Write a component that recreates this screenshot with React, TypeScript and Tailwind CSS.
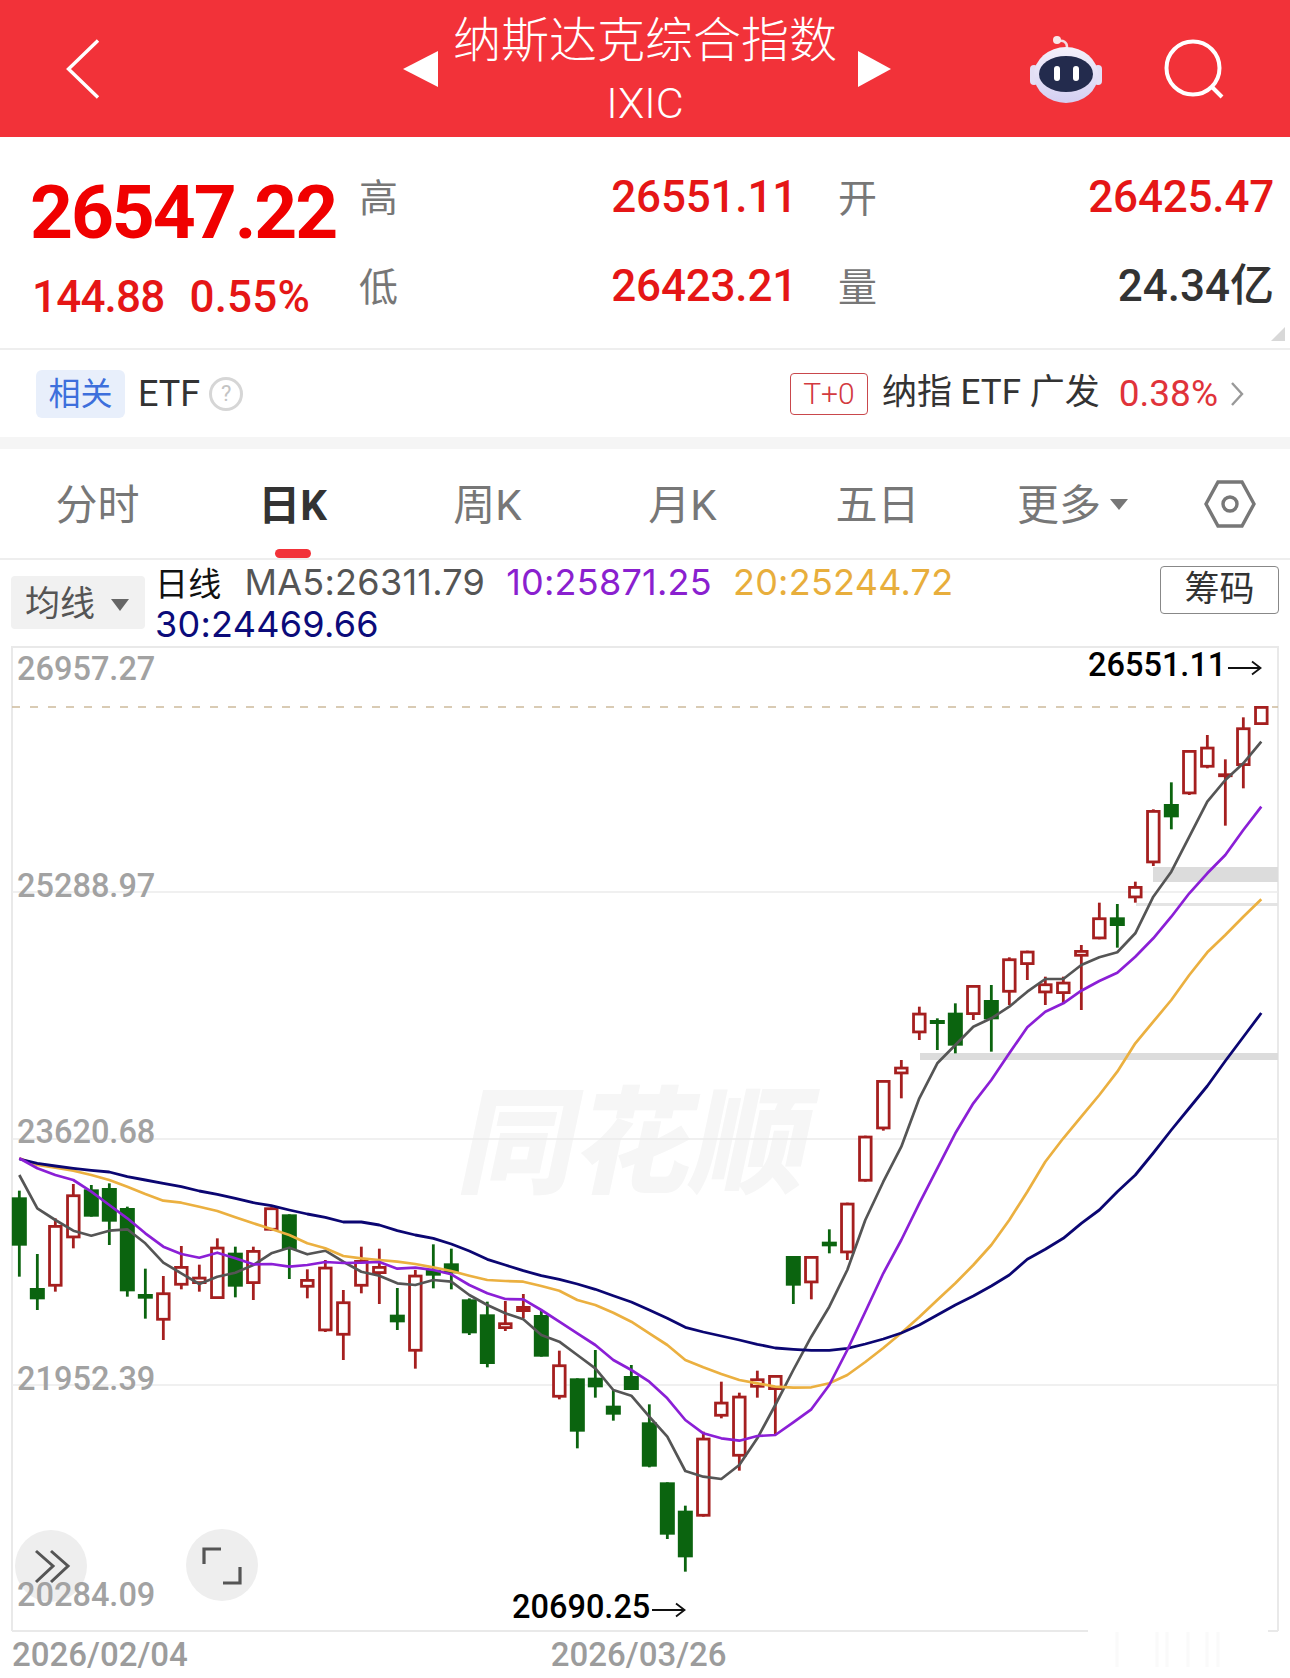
import React from 'react';

type Candle = ['r' | 'g' | 'f', number, number, number, number];

// y values are kept in thirds of a pixel, each block from its own base line
const toY = (base: number) => (v: number) => base + v / 3;
const blockA = toY(1130);
const blockB = toY(1040);
const blockC = toY(680);

const rawA: Candle[] = [
  ['g', 182, 440, 202, 347], ['g', 372, 540, 474, 508], ['r', 265, 485, 285, 470], ['r', 162, 355, 193, 325],
  ['g', 165, 260, 178, 260], ['g', 160, 345, 174, 275], ['g', 230, 500, 234, 484], ['g', 416, 566, 492, 506],
  ['r', 438, 630, 487, 572], ['r', 348, 478, 408, 467], ['r', 404, 485, 440, 462], ['r', 325, 507, 350, 507],
  ['g', 350, 502, 368, 470], ['r', 350, 510, 360, 462], ['r', 232, 302, 232, 302], ['g', 253, 447, 253, 358],
  ['r', 418, 505, 447, 473], ['r', 390, 606, 410, 604], ['r', 480, 690, 514, 617], ['r', 350, 490, 390, 470],
  ['r', 356, 522, 408, 432], ['g', 474, 600, 554, 577], ['r', 420, 716, 434, 665], ['g', 343, 475, 420, 437],
  ['g', 356, 478, 400, 430], ['g', 505, 615, 508, 610], ['g', 515, 712, 553, 702], ['r', 513, 603, 577, 597],
  ['f', 492, 565, 528, 546], ['g', 540, 680, 555, 680], ['r', 662, 808, 703, 803], ['g', 745, 955, 745, 905],
  ['g', 660, 803, 743, 772], ['g', 780, 872, 827, 854], ['g', 705, 780, 738, 780], ['g', 823, 1012, 877, 1010],
  ['g', 1057, 1227, 1057, 1214], ['g', 1127, 1325, 1142, 1282], ['r', 905, 1160, 923, 1160], ['r', 755, 865, 815, 860],
  ['r', 788, 1022, 797, 980], ['r', 722, 803, 745, 773], ['r', 735, 915, 735, 780], ['g', 378, 522, 378, 467],
  ['r', 378, 508, 378, 460], ['g', 298, 370, 335, 349], ['r', 218, 390, 218, 370],
];
const rawB: Candle[] = [['r', 287, 425, 287, 425], ['r', 120, 272, 120, 268], ['r', 60, 175, 80, 103]];
const rawC: Candle[] = [
  ['r', 980, 1080, 998, 1060], ['g', 1015, 1110, 1020, 1032], ['g', 970, 1120, 998, 1097], ['r', 915, 1020, 915, 1005],
  ['g', 915, 1115, 960, 1018], ['r', 832, 975, 835, 938], ['r', 812, 900, 812, 855], ['r', 890, 975, 910, 940],
  ['r', 890, 970, 905, 942], ['r', 795, 990, 810, 830], ['r', 668, 778, 712, 778], ['g', 672, 803, 712, 738],
  ['r', 605, 668, 618, 655], ['r', 388, 558, 390, 550], ['g', 307, 448, 372, 412], ['r', 210, 345, 210, 343],
  ['r', 165, 265, 200, 263], ['r', 238, 437, 280, 290], ['r', 112, 325, 142, 258], ['r', 78, 135, 78, 135],
];

const scale = (rows: Candle[], fn: (v: number) => number): Candle[] =>
  rows.map(([c, a, b, d, e]) => [c, fn(a), fn(b), fn(d), fn(e)]);

const candles = [...scale(rawA, blockA), ...scale(rawB, blockB), ...scale(rawC, blockC)];

const series = (a: number[], b: number[], c: number[]) => [...a.map(blockA), ...b.map(blockB), ...c.map(blockC)];
const xAt = (i: number) => 19.33 + 18 * i;

const ma5 = series(
  [135, 235, 270, 302, 317, 302, 298, 340, 398, 430, 462, 440, 428, 405, 370, 353, 373, 362, 395, 425, 437, 460, 465, 450, 455, 495, 525, 550, 568, 615, 635, 675, 715, 780, 797, 860, 920, 1023, 1040, 1047, 1005, 925, 825, 720, 620, 530, 420],
  [540, 425, 320, 175, 70, 15],
  [1040, 1015, 980, 935, 897, 897, 855, 832, 817, 760, 650, 575, 470, 365, 300, 250, 185],
);
const ma10 = series(
  [85, 115, 135, 150, 185, 225, 265, 310, 350, 372, 383, 368, 385, 403, 402, 410, 405, 396, 399, 398, 396, 416, 413, 420, 433, 465, 490, 507, 508, 540, 575, 610, 645, 690, 720, 755, 805, 870, 910, 925, 932, 918, 915, 877, 838, 765, 660],
  [815, 700, 600, 490, 385, 280, 190, 120],
  [1120, 1042, 995, 970, 932, 903, 878, 830, 775, 710, 640, 580, 525, 450, 380],
);
const ma20 = series(
  [85, 105, 113, 122, 135, 150, 170, 192, 212, 218, 230, 243, 262, 280, 297, 315, 340, 355, 378, 385, 390, 395, 402, 412, 423, 437, 450, 453, 455, 468, 482, 510, 525, 548, 575, 610, 645, 690, 712, 732, 750, 760, 770, 773, 772, 760, 735],
  [966, 924, 879, 831, 780, 730, 675, 615, 540, 455, 365, 295, 230, 165, 95],
  [1090, 1025, 960, 885, 817, 765, 710, 658],
);
const ma30 = series(
  [87, 100, 108, 115, 121, 126, 140, 150, 160, 170, 183, 193, 205, 218, 227, 240, 252, 262, 276, 276, 285, 302, 315, 325, 342, 363, 388, 405, 422, 437, 448, 462, 478, 497, 516, 540, 565, 592, 606, 618, 630, 643, 654, 658, 661, 661, 655],
  [912, 897, 879, 855, 825, 795, 768, 738, 705, 658, 628, 595, 550, 510, 455, 405],
  [1419, 1350, 1284, 1218, 1143, 1071, 999],
);

const RED_LINE = '#a51f1f';
const GREEN_LINE = '#0b640f';

const points = (ys: number[]) => ys.map((y, i) => `${xAt(i).toFixed(1)},${y.toFixed(1)}`).join(' ');

const Candles = () => (
  <>
    {candles.map(([kind, wickTop, wickBottom, top, bottom], i) => {
      const x = xAt(i);
      const stroke = kind === 'g' ? GREEN_LINE : RED_LINE;
      if (kind === 'g') {
        return (
          <g key={i}>
            <line x1={x} x2={x} y1={wickTop} y2={wickBottom} stroke={stroke} strokeWidth={2.8} />
            <rect x={x - 7.5} y={top} width={15} height={bottom - top} fill={GREEN_LINE} />
          </g>
        );
      }
      return (
        <g key={i}>
          <line x1={x} x2={x} y1={wickTop} y2={wickBottom} stroke={stroke} strokeWidth={2.8} />
          <rect
            x={x - 5.8}
            y={top + 1.4}
            width={11.6}
            height={Math.max(bottom - top - 2.8, 1)}
            fill={kind === 'f' ? '#e01010' : '#fff'}
            stroke={stroke}
            strokeWidth={2.8}
          />
        </g>
      );
    })}
  </>
);

const Robot = () => (
  <svg width="72" height="68" viewBox="0 0 72 68" fill="none">
    <defs>
      <linearGradient id="shell" x1="0" y1="0" x2="0" y2="1">
        <stop offset="0" stopColor="#f4f1fb" />
        <stop offset="1" stopColor="#d4cff2" />
      </linearGradient>
    </defs>
    <path d="M37 12 C37 7 33 5 29 6" stroke="#f3dce0" strokeWidth="2.5" strokeLinecap="round" />
    <circle cx="27" cy="5" r="4" fill="#f8e8ea" />
    <rect x="0" y="30" width="8" height="20" rx="4" fill="#e3dff5" />
    <rect x="64" y="30" width="8" height="20" rx="4" fill="#e3dff5" />
    <ellipse cx="36" cy="40" rx="32" ry="28" fill="url(#shell)" />
    <ellipse cx="36" cy="39" rx="27" ry="18" fill="#232b4d" />
    <rect x="24" y="31" width="6" height="15" rx="3" fill="#fff" />
    <rect x="43" y="31" width="6" height="15" rx="3" fill="#fff" />
  </svg>
);

const Arrow = () => (
  <svg className="ml-[2px] mt-[2px] inline-block align-middle" width="34" height="16" viewBox="0 0 34 16" fill="none">
    <path d="M0 8 H32 M24 1.5 L32.5 8 L24 14.5" stroke="#111" strokeWidth="1.8" />
  </svg>
);

const Tab = ({ label, active }: { label: string; active?: boolean }) => (
  <div className="relative flex w-[195px] items-center justify-center pt-[4px]">
    <span className={active ? 'text-[42px] font-bold text-[#333]' : 'text-[42px] text-[#777]'}>{label}</span>
    {active && <span className="absolute bottom-0 left-[80px] h-[9px] w-[36px] rounded-full bg-[#f23239]" />}
  </div>
);

const AxisLabel = ({ className, children }: { className: string; children: React.ReactNode }) => (
  <span className={`absolute left-[6px] text-[32.5px] font-medium leading-[38px] text-[#a2a2a2] ${className}`}>{children}</span>
);

const QuoteLabel = ({ children }: { children: React.ReactNode }) => (
  <span className="self-center pt-[4px] text-[39px] font-normal text-[#777]">{children}</span>
);

export default function App() {
  return (
    <div className="flex h-[1678px] w-[1290px] flex-col overflow-hidden bg-white font-['Roboto','Noto_Sans_CJK_SC',sans-serif]">
      {/* title bar */}
      <header className="grid h-[137px] shrink-0 grid-cols-[1fr_auto_1fr] items-center bg-[#f23239] text-white">
        <div className="pl-[66px]">
          <svg width="34" height="60" viewBox="0 0 34 60" fill="none">
            <path d="M32 1.5 L2.5 30 L32 58.5" stroke="#fff" strokeWidth="3.4" />
          </svg>
        </div>
        <div className="ml-[4px] flex items-center">
          <span className="h-0 w-0 border-y-[18px] border-r-[35px] border-y-transparent border-r-white" />
          <div className="ml-[14px] mr-[20px] flex w-[386px] flex-col items-center">
            <span className="text-[48px] font-light leading-[60px] text-white">纳斯达克综合指数</span>
            <span className="mt-[8px] text-[43px] font-light leading-[48px]">IXIC</span>
          </div>
          <span className="h-0 w-0 border-y-[18px] border-l-[33px] border-y-transparent border-l-white" />
        </div>
        <div className="flex items-center justify-end pr-[64px]">
          <Robot />
          <svg className="ml-[62px]" width="62" height="60" viewBox="0 0 62 60" fill="none">
            <circle cx="29" cy="29" r="26.5" stroke="#fff" strokeWidth="4" />
            <path d="M47 47 L58 58" stroke="#fff" strokeWidth="4" />
          </svg>
        </div>
      </header>

      {/* quote */}
      <section className="relative flex h-[211px] shrink-0 pl-[30px] pr-[16px]">
        <div className="w-[329px] pt-[32px] text-[#f00000]">
          <div className="text-[75px] font-bold leading-[86px] tracking-[-2.1px]">26547.22</div>
          <div className="mt-[15px] ml-[2px] flex gap-[25px] text-[44px] font-medium leading-[54px] tracking-[-0.8px] text-[#e51616]">
            <span>144.88</span>
            <span className="tracking-[0.2px]">0.55%</span>
          </div>
        </div>
        <div className="grid flex-1 grid-cols-[38px_400px_41px_38px_1fr] grid-rows-[89px_89px] pt-[15px] text-[44px] font-medium leading-[54px] text-[#e51616]">
          <QuoteLabel>高</QuoteLabel>
          <span className="self-center text-right tracking-[-0.2px]">26551.11</span>
          <span />
          <QuoteLabel>开</QuoteLabel>
          <span className="self-center text-right tracking-[-0.2px]">26425.47</span>
          <QuoteLabel>低</QuoteLabel>
          <span className="self-center text-right tracking-[-0.2px]">26423.21</span>
          <span />
          <QuoteLabel>量</QuoteLabel>
          <span className="self-center text-right text-[#333]">24.34亿</span>
        </div>
        <span className="absolute bottom-[7px] right-[5px] h-0 w-0 border-b-[14px] border-l-[14px] border-b-[#d8d8d8] border-l-transparent" />
      </section>

      {/* related ETF */}
      <section className="flex h-[89px] shrink-0 items-center border-t-2 border-[#eeeeee] pl-[36px] pr-[46px] text-[35px] text-[#333]">
        <span className="flex h-[48px] w-[89px] items-center justify-center rounded-[6px] bg-[#e8effb] text-[32px] text-[#3d6fdc]">相关</span>
        <span className="ml-[13px] text-[36px]">ETF</span>
        <span className="ml-[9px] flex h-[34px] w-[34px] items-center justify-center rounded-full border-[3px] border-[#d6d6d6] text-[22px] text-[#c4c4c4]">?</span>
        <span className="ml-auto flex h-[42px] w-[78px] items-center justify-center rounded-[4px] border border-[#c9484c] text-[30px] font-light text-[#d33a3f]">T+0</span>
        <span className="ml-[14px]">纳指 ETF 广发</span>
        <span className="ml-[19px] text-[37px] text-[#e0333a]">0.38%</span>
        <svg className="ml-[12px]" width="14" height="26" viewBox="0 0 14 26" fill="none">
          <path d="M2 2 L12 13 L2 24" stroke="#999" strokeWidth="2.4" />
        </svg>
      </section>

      <div className="h-[12px] shrink-0 bg-[#f5f5f5]" />

      {/* period tabs */}
      <nav className="flex h-[109px] shrink-0">
        <Tab label="分时" />
        <Tab label="日K" active />
        <Tab label="周K" />
        <Tab label="月K" />
        <Tab label="五日" />
        <div className="flex w-[195px] items-center justify-center pt-[4px] text-[42px] text-[#777]">
          更多
          <span className="ml-[9px] mt-[-2px] h-0 w-0 border-x-[9px] border-t-[11px] border-x-transparent border-t-[#777]" />
        </div>
        <div className="flex flex-1 items-center justify-center">
          <svg width="52" height="48" viewBox="0 0 52 48" fill="none">
            <path d="M14 2 H38 L50 24 L38 46 H14 L2 24 Z" stroke="#777" strokeWidth="3.4" />
            <circle cx="26" cy="24" r="7" stroke="#777" strokeWidth="3.4" />
          </svg>
        </div>
      </nav>

      {/* indicator row */}
      <section className="relative flex h-[88px] shrink-0 items-start border-t-2 border-[#eeeeee] pl-[11px]">
        <div className="mt-[16px] flex h-[53px] w-[134px] items-center rounded-[4px] bg-[#f1f1f1] pl-[14px] pt-[5px] text-[35px] text-[#555]">
          均线
          <span className="ml-[16px] h-0 w-0 border-x-[9px] border-t-[12px] border-x-transparent border-t-[#666]" />
        </div>
        <div className="ml-[10px] flex flex-wrap font-['Inter','Noto_Sans_CJK_SC',sans-serif] text-[36px] leading-[42px] tracking-[0.25px]">
          <div className="flex h-[43px] items-center whitespace-nowrap">
            <span className="font-['Noto_Sans_CJK_SC',sans-serif] text-[33px] text-[#111]">日线</span>
            <span className="ml-[23px] text-[#555]">MA5:26311.79</span>
            <span className="ml-[21px] text-[#8a20cf]">10:25871.25</span>
            <span className="ml-[21px] text-[#e8ae3c]">20:25244.72</span>
          </div>
          <div className="h-[42px] w-full whitespace-nowrap text-[#0b0b7a]">30:24469.66</div>
        </div>
        <span className="absolute right-[11px] top-[6px] flex h-[48px] w-[119px] items-center justify-center rounded-[4px] border border-[#888] text-[35px] text-[#333]">筹码</span>
      </section>

      {/* kline chart */}
      <div className="relative ml-[11px] h-[986px] w-[1268px] shrink-0">
        <span className="absolute left-[455px] top-[412px] -skew-x-12 font-['Noto_Sans_CJK_SC',sans-serif] text-[116px] font-black leading-[150px] text-[#f6f6f6]">同花顺</span>
        <svg className="absolute inset-0" width="1268" height="986" viewBox="11 646 1268 986" fill="none">
          <path d="M12 1631 V647 H1278 V1631 M1268 1631 H1278" stroke="#e9e9e9" strokeWidth="2" />
          <path d="M12 1631 H1088" stroke="#e9e9e9" strokeWidth="2" />
          <path d="M12 892 H1278 M12 1139 H1278 M12 1385 H1278" stroke="#ebebeb" strokeWidth="1.5" />
          <path d="M12 707 H1278" stroke="#cdbb9c" strokeWidth="1.4" strokeDasharray="8 10" />
          <rect x="1153" y="867" width="125" height="15" fill="#dcdcdc" />
          <rect x="1136" y="903" width="142" height="3" fill="#e4e4e4" />
          <rect x="920" y="1053" width="358" height="7" fill="#dcdcdc" />
          <Candles />
          <polyline points={points(ma5)} stroke="#555" strokeWidth="2.7" strokeLinejoin="round" />
          <polyline points={points(ma20)} stroke="#ebb040" strokeWidth="2.7" strokeLinejoin="round" />
          <polyline points={points(ma30)} stroke="#0b0672" strokeWidth="2.8" strokeLinejoin="round" />
          <polyline points={points(ma10)} stroke="#8b1fd6" strokeWidth="2.7" strokeLinejoin="round" />
          <circle cx="51" cy="1566" r="36" fill="#eeeeee" />
          <path d="M36 1551 L53 1566 L36 1582 M51 1551 L68 1566 L51 1582" stroke="#555" strokeWidth="3" />
          <circle cx="222" cy="1565" r="36" fill="#eeeeee" />
          <path d="M204 1564 V1549 H221 M223 1583 H240 V1567" stroke="#555" strokeWidth="3.2" />
        </svg>
        <AxisLabel className="top-[4px]">26957.27</AxisLabel>
        <AxisLabel className="top-[221px]">25288.97</AxisLabel>
        <AxisLabel className="top-[467px]">23620.68</AxisLabel>
        <AxisLabel className="top-[714px]">21952.39</AxisLabel>
        <AxisLabel className="top-[930px]">20284.09</AxisLabel>
        <span className="absolute left-[1077px] top-0 whitespace-nowrap text-[32.5px] font-medium leading-[38px] text-black">
          26551.11
          <Arrow />
        </span>
        <span className="absolute left-[501px] top-[942px] whitespace-nowrap text-[32.5px] font-medium leading-[38px] text-black">
          20690.25
          <Arrow />
        </span>
      </div>

      {/* date axis */}
      <div className="relative flex h-[46px] shrink-0 pl-[12px] pt-[2px] text-[33px] font-medium leading-[42px] text-[#9c9c9c]">
        <span>2026/02/04</span>
        <span className="ml-[363px]">2026/03/26</span>
        <svg className="absolute left-0 top-0" width="1290" height="36" fill="none">
          <path d="M1117 0 V35 M1157 0 V35 M1167 0 V35 M1188 0 V35 M1207 0 V35 M1218 0 V35" stroke="#fafafa" strokeWidth="3" />
        </svg>
      </div>
    </div>
  );
}
